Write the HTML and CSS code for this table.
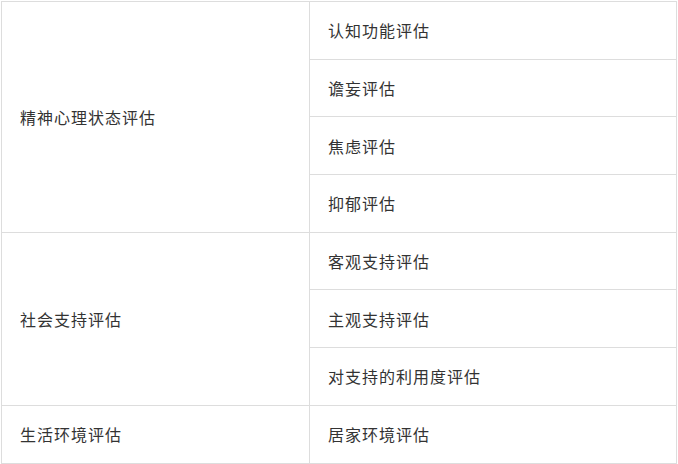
FILE: index.html
```html
<!DOCTYPE html>
<html lang="zh-CN">
<head>
<meta charset="utf-8">
<title>评估项目</title>
<link rel="stylesheet" href="styles.css">
</head>
<body>
<div class="wrap">
<table class="eval-table">
  <tbody>
    <tr>
      <td class="cat" rowspan="4">精神心理状态评估</td>
      <td class="item">认知功能评估</td>
    </tr>
    <tr><td class="item">谵妄评估</td></tr>
    <tr><td class="item">焦虑评估</td></tr>
    <tr><td class="item">抑郁评估</td></tr>
    <tr>
      <td class="cat" rowspan="3">社会支持评估</td>
      <td class="item">客观支持评估</td>
    </tr>
    <tr><td class="item">主观支持评估</td></tr>
    <tr><td class="item">对支持的利用度评估</td></tr>
    <tr>
      <td class="cat">生活环境评估</td>
      <td class="item">居家环境评估</td>
    </tr>
  </tbody>
</table>
</div>
</body>
</html>
```

FILE: styles.css
```css
html, body {
  margin: 0;
  padding: 0;
  background: #ffffff;
}
.wrap {
  padding: 1px 0 0 1px;
}
.eval-table {
  border-collapse: collapse;
  width: 676px;
  table-layout: fixed;
  font-family: "Noto Sans CJK SC", "Noto Sans", sans-serif;
  font-size: 16px;
  letter-spacing: 1px;
  color: #333333;
}
.eval-table td {
  border: 1px solid #dddddd;
  padding: 0 18px;
  height: 56.7px;
  vertical-align: middle;
  line-height: 20px;
}
.eval-table td.cat {
  width: 271px;
}
```
